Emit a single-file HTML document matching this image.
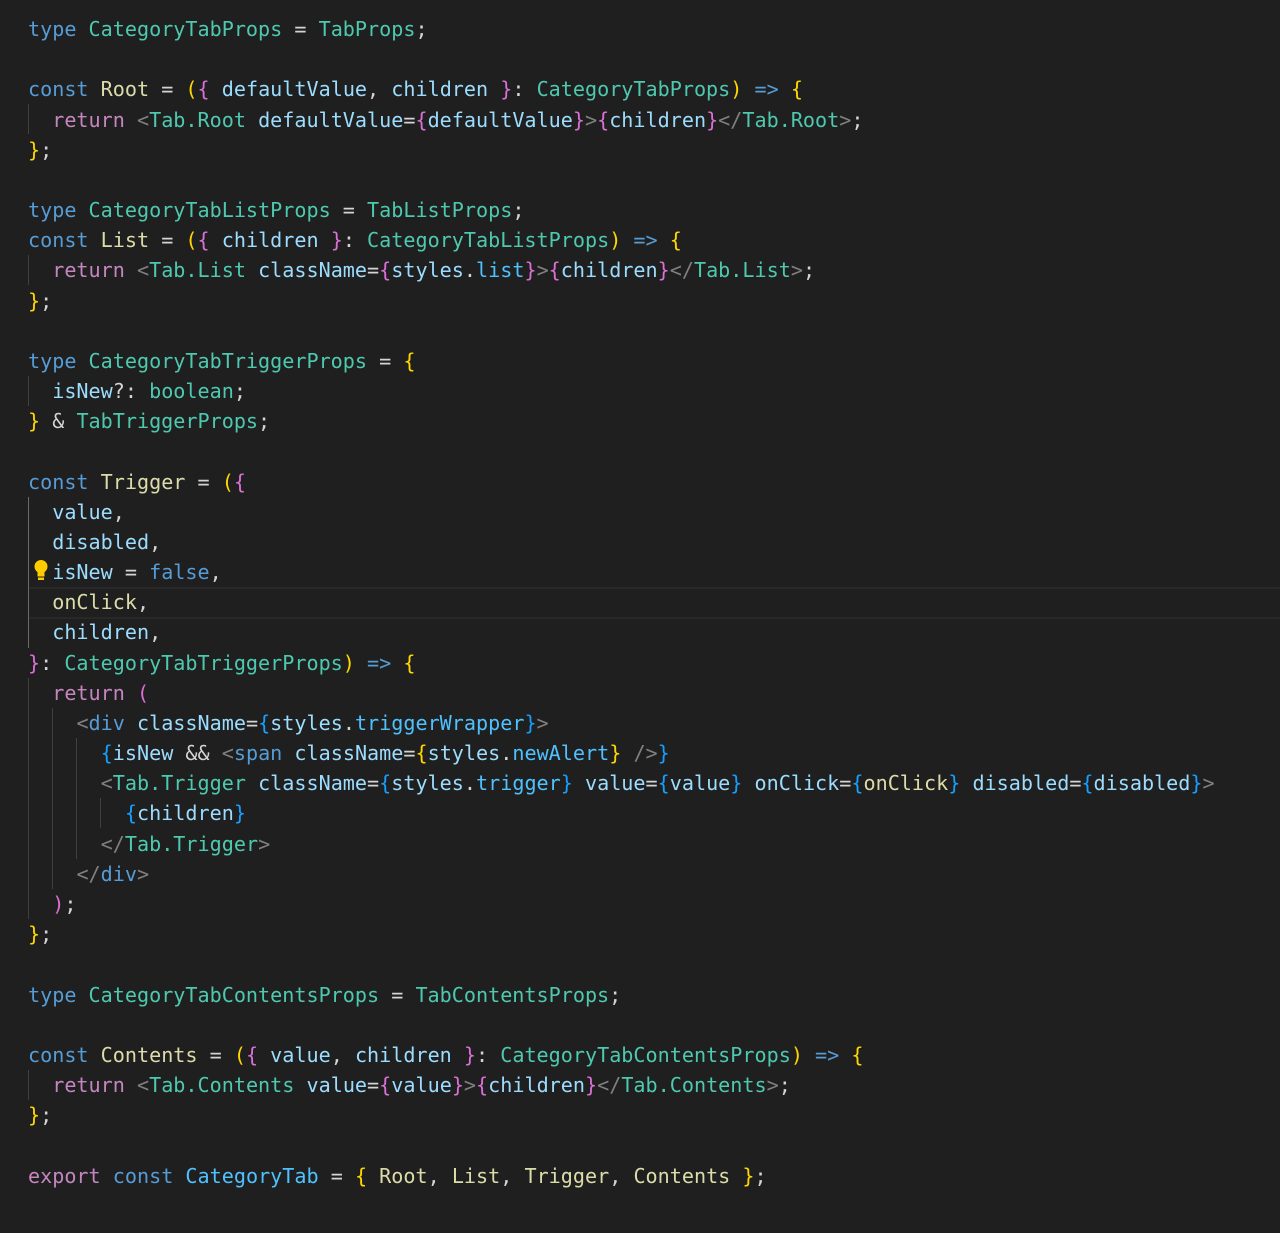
<!DOCTYPE html>
<html><head><meta charset="utf-8"><style>
html,body{margin:0;padding:0;background:#1f1f1f;}
body{width:1280px;height:1233px;position:relative;overflow:hidden;}
#code{position:absolute;left:28px;top:14px;font-family:"DejaVu Sans Mono","Liberation Mono",monospace;font-size:20.12px;color:#d4d4d4;}
.l{height:30.18px;line-height:30.18px;white-space:pre;}
.k{color:#569cd6}.r{color:#c586c0}.t{color:#4ec9b0}.v{color:#9cdcfe}.f{color:#dcdcaa}
.y{color:#ffd700}.p{color:#da70d6}.b{color:#179fff}.g{color:#808080}.pr{color:#4fc1ff}
.guide{position:absolute;width:1px;background:#404040;}
.hl{position:absolute;left:28px;width:1252px;height:28px;border-top:2px solid #282828;border-bottom:2px solid #282828;}
</style></head><body>
<div class="hl" style="top:587px"></div>
<div class="guide" style="left:28px;top:104px;height:30px"></div>
<div class="guide" style="left:28px;top:255px;height:30px"></div>
<div class="guide" style="left:28px;top:376px;height:30px"></div>
<div class="guide" style="left:28px;top:497px;height:151px;background:#6a6a6a"></div>
<div class="guide" style="left:28px;top:678px;height:241px"></div>
<div class="guide" style="left:52px;top:708px;height:181px"></div>
<div class="guide" style="left:76px;top:738px;height:121px"></div>
<div class="guide" style="left:100px;top:798px;height:30px"></div>
<div class="guide" style="left:28px;top:1070px;height:30px"></div>
<svg style="position:absolute;left:33px;top:559px" width="16" height="24" viewBox="0 0 16 24"><circle cx="8" cy="7.5" r="6.5" fill="#ffcc00"/><rect x="4.5" y="11" width="7" height="7" fill="#ffcc00"/><rect x="5" y="18" width="6" height="3" fill="#ffcc00"/><rect x="4.5" y="17.5" width="7" height="1" fill="#1f1f1f"/></svg>
<div id="code">
<div class="l"><span class="k">type</span> <span class="t">CategoryTabProps</span> = <span class="t">TabProps</span>;</div>
<div class="l"> </div>
<div class="l"><span class="k">const</span> <span class="f">Root</span> = <span class="y">(</span><span class="p">{</span> <span class="v">defaultValue</span>, <span class="v">children</span> <span class="p">}</span>: <span class="t">CategoryTabProps</span><span class="y">)</span> <span class="k">=&gt;</span> <span class="y">{</span></div>
<div class="l">  <span class="r">return</span> <span class="g">&lt;</span><span class="t">Tab.Root</span> <span class="v">defaultValue</span>=<span class="p">{</span><span class="v">defaultValue</span><span class="p">}</span><span class="g">&gt;</span><span class="p">{</span><span class="v">children</span><span class="p">}</span><span class="g">&lt;/</span><span class="t">Tab.Root</span><span class="g">&gt;</span>;</div>
<div class="l"><span class="y">}</span>;</div>
<div class="l"> </div>
<div class="l"><span class="k">type</span> <span class="t">CategoryTabListProps</span> = <span class="t">TabListProps</span>;</div>
<div class="l"><span class="k">const</span> <span class="f">List</span> = <span class="y">(</span><span class="p">{</span> <span class="v">children</span> <span class="p">}</span>: <span class="t">CategoryTabListProps</span><span class="y">)</span> <span class="k">=&gt;</span> <span class="y">{</span></div>
<div class="l">  <span class="r">return</span> <span class="g">&lt;</span><span class="t">Tab.List</span> <span class="v">className</span>=<span class="p">{</span><span class="v">styles</span>.<span class="pr">list</span><span class="p">}</span><span class="g">&gt;</span><span class="p">{</span><span class="v">children</span><span class="p">}</span><span class="g">&lt;/</span><span class="t">Tab.List</span><span class="g">&gt;</span>;</div>
<div class="l"><span class="y">}</span>;</div>
<div class="l"> </div>
<div class="l"><span class="k">type</span> <span class="t">CategoryTabTriggerProps</span> = <span class="y">{</span></div>
<div class="l">  <span class="v">isNew</span>?: <span class="t">boolean</span>;</div>
<div class="l"><span class="y">}</span> &amp; <span class="t">TabTriggerProps</span>;</div>
<div class="l"> </div>
<div class="l"><span class="k">const</span> <span class="f">Trigger</span> = <span class="y">(</span><span class="p">{</span></div>
<div class="l">  <span class="v">value</span>,</div>
<div class="l">  <span class="v">disabled</span>,</div>
<div class="l">  <span class="v">isNew</span> = <span class="k">false</span>,</div>
<div class="l">  <span class="f">onClick</span>,</div>
<div class="l">  <span class="v">children</span>,</div>
<div class="l"><span class="p">}</span>: <span class="t">CategoryTabTriggerProps</span><span class="y">)</span> <span class="k">=&gt;</span> <span class="y">{</span></div>
<div class="l">  <span class="r">return</span> <span class="p">(</span></div>
<div class="l">    <span class="g">&lt;</span><span class="k">div</span> <span class="v">className</span>=<span class="b">{</span><span class="v">styles</span>.<span class="pr">triggerWrapper</span><span class="b">}</span><span class="g">&gt;</span></div>
<div class="l">      <span class="b">{</span><span class="v">isNew</span> &amp;&amp; <span class="g">&lt;</span><span class="k">span</span> <span class="v">className</span>=<span class="y">{</span><span class="v">styles</span>.<span class="pr">newAlert</span><span class="y">}</span> <span class="g">/&gt;</span><span class="b">}</span></div>
<div class="l">      <span class="g">&lt;</span><span class="t">Tab.Trigger</span> <span class="v">className</span>=<span class="b">{</span><span class="v">styles</span>.<span class="pr">trigger</span><span class="b">}</span> <span class="v">value</span>=<span class="b">{</span><span class="v">value</span><span class="b">}</span> <span class="v">onClick</span>=<span class="b">{</span><span class="f">onClick</span><span class="b">}</span> <span class="v">disabled</span>=<span class="b">{</span><span class="v">disabled</span><span class="b">}</span><span class="g">&gt;</span></div>
<div class="l">        <span class="b">{</span><span class="v">children</span><span class="b">}</span></div>
<div class="l">      <span class="g">&lt;/</span><span class="t">Tab.Trigger</span><span class="g">&gt;</span></div>
<div class="l">    <span class="g">&lt;/</span><span class="k">div</span><span class="g">&gt;</span></div>
<div class="l">  <span class="p">)</span>;</div>
<div class="l"><span class="y">}</span>;</div>
<div class="l"> </div>
<div class="l"><span class="k">type</span> <span class="t">CategoryTabContentsProps</span> = <span class="t">TabContentsProps</span>;</div>
<div class="l"> </div>
<div class="l"><span class="k">const</span> <span class="f">Contents</span> = <span class="y">(</span><span class="p">{</span> <span class="v">value</span>, <span class="v">children</span> <span class="p">}</span>: <span class="t">CategoryTabContentsProps</span><span class="y">)</span> <span class="k">=&gt;</span> <span class="y">{</span></div>
<div class="l">  <span class="r">return</span> <span class="g">&lt;</span><span class="t">Tab.Contents</span> <span class="v">value</span>=<span class="p">{</span><span class="v">value</span><span class="p">}</span><span class="g">&gt;</span><span class="p">{</span><span class="v">children</span><span class="p">}</span><span class="g">&lt;/</span><span class="t">Tab.Contents</span><span class="g">&gt;</span>;</div>
<div class="l"><span class="y">}</span>;</div>
<div class="l"> </div>
<div class="l"><span class="r">export</span> <span class="k">const</span> <span style="color:#4fc1ff">CategoryTab</span> = <span class="y">{</span> <span class="f">Root</span>, <span class="f">List</span>, <span class="f">Trigger</span>, <span class="f">Contents</span> <span class="y">}</span>;</div>
</div>
</body></html>
